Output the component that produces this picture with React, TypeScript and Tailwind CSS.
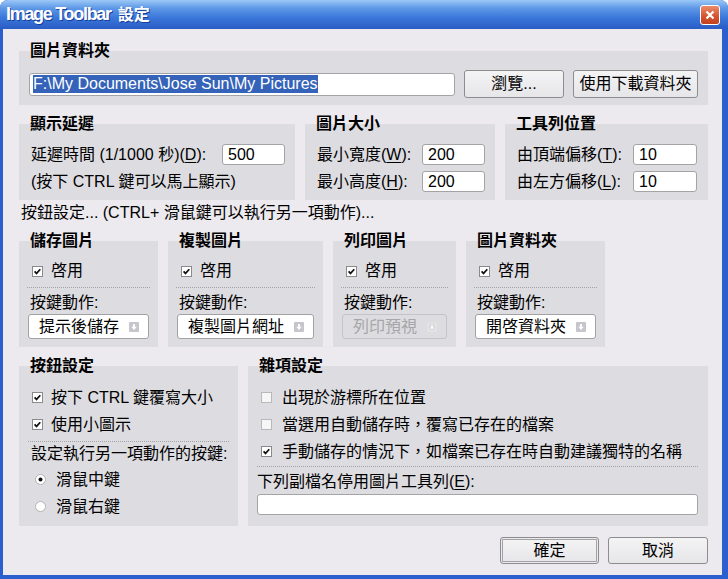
import React from 'react'

const FONT = "font-['Liberation_Sans','Noto_Sans_CJK_TC',sans-serif]"

function Mn({ children }: { children: React.ReactNode }) {
  return <span className="underline underline-offset-2">{children}</span>
}

function Check({ checked }: { checked: boolean }) {
  return (
    <svg width="11" height="11" viewBox="0 0 11 11" className="flex-none">
      <rect
        x="0.5"
        y="0.5"
        width="10"
        height="10"
        fill={checked ? '#ffffff' : '#f6f6f7'}
        stroke={checked ? '#8a8a8c' : '#b8b8ba'}
      />
      {checked && (
        <path d="M2.6 5.4 L4.5 7.4 L8.3 3.2" fill="none" stroke="#111" strokeWidth="1.7" />
      )}
    </svg>
  )
}

function Radio({ checked }: { checked: boolean }) {
  return (
    <svg width="11" height="11" viewBox="0 0 11 11" className="flex-none">
      <circle cx="5.5" cy="5.5" r="5" fill="#ffffff" stroke="#b2b2b4" />
      {checked && <circle cx="5.5" cy="5.5" r="2" fill="#111" />}
    </svg>
  )
}

function DropArrow({ disabled }: { disabled?: boolean }) {
  return (
    <svg width="10" height="10" viewBox="0 0 10 10" className="flex-none">
      <rect x="0" y="0" width="10" height="10" rx="1" fill={disabled ? '#e2e1e4' : '#c6c5cc'} />
      <path d="M4 2 H6 V4.8 H7.8 L5 8 L2.2 4.8 H4 Z" fill="#ffffff" stroke={disabled ? '#b9b9bb' : 'none'} strokeWidth="0.5" />
    </svg>
  )
}

function Select({ value, disabled }: { value: string; disabled?: boolean }) {
  return (
    <div
      className={`h-[25px] flex items-center justify-between pl-[10px] pr-[9px] rounded-[3px] border ${
        disabled ? 'border-[#c4c4c6] text-[#a6a6a8] bg-transparent' : 'border-[#a2a2a4] bg-white text-black'
      }`}
    >
      <span className="leading-[18px]">{value}</span>
      <DropArrow disabled={disabled} />
    </div>
  )
}

function TextBox({ value, className }: { value: string; className: string }) {
  return (
    <div
      className={`h-[21px] bg-white border border-[#a4a4a6] rounded-[3px] flex items-center pl-[5px] leading-[18px] ${className}`}
    >
      {value}
    </div>
  )
}

function Btn({ label, className, isDefault }: { label: string; className: string; isDefault?: boolean }) {
  return (
    <div
      className={`flex items-center justify-center rounded-[3px] border border-[#8d8d8f] bg-[linear-gradient(to_bottom,#f4f4f5,#e6e5e8)] leading-[18px] ${
        isDefault ? 'shadow-[inset_0_0_0_1px_#eceaee,inset_0_0_0_2px_#a2a2a4]' : ''
      } ${className}`}
    >
      {label}
    </div>
  )
}

function Group({
  title,
  className,
  boxClass,
  children,
}: {
  title: string
  className?: string
  boxClass?: string
  children: React.ReactNode
}) {
  return (
    <div className={`flex flex-col ${className ?? ''}`}>
      <div className="relative z-10 ml-[11px] h-[18px] leading-[18px] font-bold">{title}</div>
      <div className={`-mt-[9px] bg-[#dddce0] ${boxClass ?? ''}`}>{children}</div>
    </div>
  )
}

function ButtonGroup({
  title,
  action,
  disabled,
  className,
}: {
  title: string
  action: string
  disabled?: boolean
  className: string
}) {
  return (
    <Group title={title} className={className} boxClass="h-[106px] flex flex-col pt-[21px] px-[8px]">
      <div className="h-[18px] flex items-center gap-[8px] pl-[5px]">
        <Check checked />
        <span className="leading-[18px]">啓用</span>
      </div>
      <div className="mt-[7px] border-t border-dotted border-[#a4a4a6]" />
      <div className="mt-[6px] h-[18px] leading-[18px] pl-[3px]">按鍵動作:</div>
      <div className="mt-[2px] px-[1px]">
        <Select value={action} disabled={disabled} />
      </div>
    </Group>
  )
}

export default function App() {
  return (
    <div className={`w-[728px] h-[579px] flex flex-col bg-[#2b5fcd] rounded-t-[8px] overflow-hidden text-[16px] text-black ${FONT}`}>
      <div className="h-[29px] flex-none flex items-center justify-between pl-[6px] pr-[8px] bg-[linear-gradient(to_bottom,#9cc8f7_0%,#5e98e6_28%,#3a76da_62%,#2a5cc4_100%)]">
        <div className="flex items-baseline text-white font-bold [text-shadow:1px_1px_0_#173f9a]">
          <span className="text-[18px] tracking-[-1.3px]">Image Toolbar</span>
          <span className="ml-[7px] text-[16px]">設定</span>
        </div>
        <div className="w-[20px] h-[20px] rounded-[3px] border border-white bg-[linear-gradient(to_bottom,#ec8a6a,#d3532f_60%,#c2411f)] flex items-center justify-center">
          <svg width="10" height="10" viewBox="0 0 10 10">
            <path d="M1.5 1.5 L8.5 8.5 M8.5 1.5 L1.5 8.5" stroke="#fff" strokeWidth="2.2" />
          </svg>
        </div>
      </div>

      <div className="flex-1 ml-[3px] mr-[6px] mb-[4px] bg-[#eceaee] flex flex-col pl-[16px] pr-[14px] pt-[13px]">
        <Group title="圖片資料夾" boxClass="flex items-center gap-[9px] pt-[19px] pb-[7px] px-[10px]">
          <div className="w-[426px] h-[23px] bg-white border border-[#a4a4a6] rounded-[3px] flex items-center pl-[3px]">
            <span className="bg-[#3463b9] text-white leading-[18px]">F:\My Documents\Jose Sun\My Pictures</span>
          </div>
          <Btn label="瀏覽..." className="w-[100px] h-[28px]" />
          <Btn label="使用下載資料夾" className="w-[125px] h-[28px]" />
        </Group>

        <div className="mt-[10px] flex gap-[10px]">
          <Group title="顯示延遲" className="w-[276px]" boxClass="h-[76px] pt-[17px] pl-[12px] pr-[10px]">
            <div className="h-[27px] flex items-center justify-between">
              <span className="leading-[18px]">
                延遲時間 (1/1000 秒)(<Mn>D</Mn>):
              </span>
              <TextBox value="500" className="w-[63px]" />
            </div>
            <div className="h-[27px] flex items-center leading-[18px]">(按下 CTRL 鍵可以馬上顯示)</div>
          </Group>
          <Group title="圖片大小" className="w-[190px]" boxClass="h-[76px] pt-[17px] pl-[12px] pr-[10px]">
            <div className="h-[27px] flex items-center justify-between">
              <span className="leading-[18px]">
                最小寬度(<Mn>W</Mn>):
              </span>
              <TextBox value="200" className="w-[63px]" />
            </div>
            <div className="h-[27px] flex items-center justify-between">
              <span className="leading-[18px]">
                最小高度(<Mn>H</Mn>):
              </span>
              <TextBox value="200" className="w-[63px]" />
            </div>
          </Group>
          <Group title="工具列位置" className="flex-1" boxClass="h-[76px] pt-[17px] pl-[12px] pr-[11px]">
            <div className="h-[27px] flex items-center justify-between">
              <span className="leading-[18px]">
                由頂端偏移(<Mn>T</Mn>):
              </span>
              <TextBox value="10" className="w-[64px]" />
            </div>
            <div className="h-[27px] flex items-center justify-between">
              <span className="leading-[18px]">
                由左方偏移(<Mn>L</Mn>):
              </span>
              <TextBox value="10" className="w-[64px]" />
            </div>
          </Group>
        </div>

        <div className="mt-[4px] ml-[2px] h-[18px] leading-[18px]">按鈕設定... (CTRL+ 滑鼠鍵可以執行另一項動作)...</div>

        <div className="mt-[10px] flex gap-[10px]">
          <ButtonGroup title="儲存圖片" action="提示後儲存" className="w-[139px]" />
          <ButtonGroup title="複製圖片" action="複製圖片網址" className="w-[155px]" />
          <ButtonGroup title="列印圖片" action="列印預視" disabled className="w-[123px]" />
          <ButtonGroup title="圖片資料夾" action="開啓資料夾" className="w-[139px]" />
        </div>

        <div className="mt-[10px] flex gap-[10px]">
          <Group title="按鈕設定" className="w-[219px]" boxClass="h-[160px] flex flex-col pt-[18px] px-[9px]">
            <div className="h-[27px] flex items-center gap-[8px] pl-[4px]">
              <Check checked />
              <span className="leading-[18px]">按下 CTRL 鍵覆寫大小</span>
            </div>
            <div className="h-[27px] flex items-center gap-[8px] pl-[4px]">
              <Check checked />
              <span className="leading-[18px]">使用小圖示</span>
            </div>
            <div className="mt-[3px] border-t border-dotted border-[#a4a4a6]" />
            <div className="mt-[3px] h-[18px] leading-[18px] pl-[3px]">設定執行另一項動作的按鍵:</div>
            <div className="mt-[3px] h-[27px] flex items-center gap-[10px] pl-[7px]">
              <Radio checked />
              <span className="leading-[18px]">滑鼠中鍵</span>
            </div>
            <div className="h-[27px] flex items-center gap-[10px] pl-[7px]">
              <Radio checked={false} />
              <span className="leading-[18px]">滑鼠右鍵</span>
            </div>
          </Group>
          <Group title="雜項設定" className="flex-1" boxClass="h-[160px] flex flex-col pt-[18px] pl-[9px] pr-[10px]">
            <div className="h-[27px] flex items-center gap-[10px] pl-[4px]">
              <Check checked={false} />
              <span className="leading-[18px]">出現於游標所在位置</span>
            </div>
            <div className="h-[27px] flex items-center gap-[10px] pl-[4px]">
              <Check checked={false} />
              <span className="leading-[18px]">當選用自動儲存時，覆寫已存在的檔案</span>
            </div>
            <div className="h-[27px] flex items-center gap-[10px] pl-[4px]">
              <Check checked />
              <span className="leading-[18px]">手動儲存的情況下，如檔案已存在時自動建議獨特的名稱</span>
            </div>
            <div className="mt-[1px] border-t border-dotted border-[#a4a4a6]" />
            <div className="mt-[6px] h-[18px] leading-[18px]">
              下列副檔名停用圖片工具列(<Mn>E</Mn>):
            </div>
            <TextBox value="" className="mt-[3px] w-full" />
          </Group>
        </div>

        <div className="mt-[11px] flex justify-end gap-[9px]">
          <Btn label="確定" isDefault className="w-[99px] h-[27px]" />
          <Btn label="取消" className="w-[100px] h-[27px]" />
        </div>
      </div>
    </div>
  )
}
